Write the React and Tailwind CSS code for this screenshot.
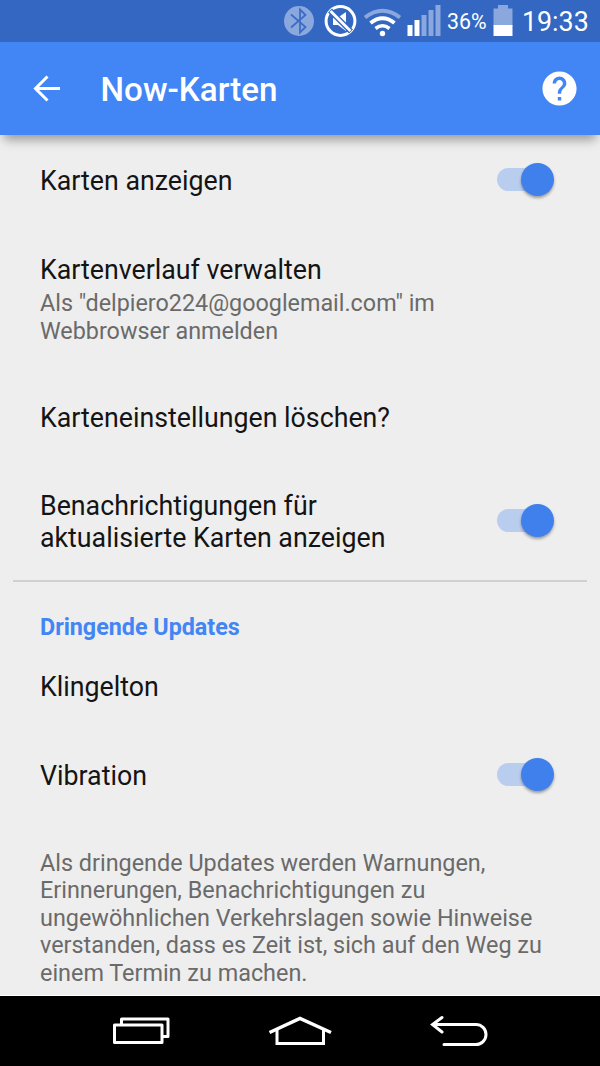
import { useState } from 'react';

function Toggle({ label, checked, onChange }) {
  return (
    <button
      role="switch"
      aria-label={label}
      aria-checked={checked}
      onClick={() => onChange(!checked)}
      className="flex w-[57px] h-[34px] -mt-[13px] -mb-[8px] items-center shrink-0"
    >
      <span className={checked ? 'w-10 h-[23px] rounded-full bg-[#b9ceef]' : 'w-10 h-[23px] rounded-full bg-[#b9b9b9]'} />
      <span
        className={
          checked
            ? 'size-[33px] -ml-4 rounded-full bg-[#4080ec] shadow-[0_2px_3px_rgba(0,0,0,0.35)]'
            : 'size-[33px] -ml-10 rounded-full bg-[#f1f1f1] shadow-[0_2px_3px_rgba(0,0,0,0.35)]'
        }
      />
    </button>
  );
}

// One preference row: title, optional summary, optional switch
function Row({ title, summary, children }) {
  return (
    <div className="flex items-center justify-between pl-10 pr-[46px] py-[28.7px]">
      <div>
        <div className="text-[26.75px] leading-[31.25px] text-[#141414] whitespace-pre-line">{title}</div>
        {summary && (
          <div className="mt-[4px] text-[23.33px] leading-[27.5px] text-[#6a6a6a] whitespace-pre-line">{summary}</div>
        )}
      </div>
      {children}
    </div>
  );
}

function StatusBar() {
  return (
    <div className="flex h-[42px] items-center justify-end bg-[#3367c1] pr-3 text-white">
      <svg width="158" height="42" viewBox="284 0 158 42" fill="none">
        {/* Bluetooth */}
        <circle cx="299" cy="21" r="15" fill="#8aa8de" />
        <path d="M291 14.5 L305.500 27 L300 32.500 V9.500 L305.500 15 L291 27.5" stroke="#3c6dc4" strokeWidth="1.800" />
        {/* Muted */}
        <circle cx="340.500" cy="21" r="14.4" stroke="#fff" strokeWidth="3" />
        <path d="M333 17.5 H338 L346 12 V31 L338 25 H333 Z" fill="#fff" />
        <path d="M330 10.500 L351 31.500" stroke="#3367c1" strokeWidth="5.500" />
        <path d="M330.500 11 L350.500 31" stroke="#fff" strokeWidth="2.800" />
        {/* Wifi */}
        <path d="M365 17.500 Q382.500 4 400 17.500" stroke="#8aa8de" strokeWidth="4" />
        <path d="M370.500 23 Q382.500 13.500 394.500 23" stroke="#fff" strokeWidth="3.800" />
        <path d="M375.500 28.500 Q382.500 23 389.500 28.500" stroke="#fff" strokeWidth="3.600" />
        <circle cx="382.500" cy="33.500" r="2.700" fill="#fff" />
        {/* Signal */}
        <path d="M407.500 25 h5 v11 h-5z M414.500 20 h5 v16 h-5z" fill="#fff" />
        <path d="M421.500 15 h5 v21 h-5z M428.500 10 h5 v26 h-5z M435.500 5 h5 v31 h-5z" fill="#8aa8de" />
      </svg>
      <span className="ml-[5px] mt-[2px] w-[41px] whitespace-nowrap text-[21.3px] leading-none">36%</span>
      <svg className="ml-[5px]" width="20" height="42" viewBox="0 0 20 42">
        <path d="M5 5 H15 V8.500 H19.500 V26 H0.500 V8.500 H5 Z" fill="#8aa8de" />
        <path d="M0.500 25 H19.500 V36 H0.500 Z" fill="#fff" />
      </svg>
      <span className="ml-[9px] mt-[3px] w-[66px] whitespace-nowrap text-[26.8px] leading-none">19:33</span>
    </div>
  );
}

function AppBar() {
  return (
    <header className="relative flex h-[93px] items-center bg-[#4285f4] pl-[33px] pr-[20px] text-white shadow-[0_9px_10px_-4px_rgba(0,0,0,0.35)]">
      <button aria-label="Zurück">
        <svg width="28" height="28" viewBox="0 0 28 28" fill="none" stroke="#fff" strokeWidth="3">
          <path d="M27 13.500 H3 M14.500 1.500 L2.500 13.500 L14.500 25.500" />
        </svg>
      </button>
      <h1 className="ml-[39.5px] mt-[2px] flex-1 text-[33.2px] font-medium leading-none">Now-Karten</h1>
      <button aria-label="Hilfe">
        <svg width="41" height="41" viewBox="0 0 24 24" fill="#fff">
          <path d="M12 2C6.480 2 2 6.480 2 12s4.480 10 10 10 10-4.480 10-10S17.520 2 12 2zm1 17h-2v-2h2v2zm2.070-7.750l-.9.920C13.450 12.900 13 13.500 13 15h-2v-.5c0-1.100.450-2.100 1.170-2.830l1.240-1.260c.370-.360.590-.860.590-1.410 0-1.100-.9-2-2-2s-2 .9-2 2H8c0-2.210 1.790-4 4-4s4 1.790 4 4c0 .880-.360 1.680-.930 2.250z" />
        </svg>
      </button>
    </header>
  );
}

function NavBar() {
  return (
    <nav className="flex h-[70px] items-center bg-black">
      <svg width="600" height="70" viewBox="0 996 600 70" fill="none" stroke="#fff" strokeWidth="3">
        <path d="M114.500 1025 H162 V1042.500 H114.500 Z M121.500 1025 V1019 H168 V1036.500 H162" strokeLinejoin="round" />
        <path d="M269.500 1032.500 L300 1018.500 L331 1032.500" strokeWidth="3.500" />
        <path d="M277 1030 V1043.500 H323.500 V1030" />
        <path d="M442 1017.500 L432.500 1024.500 L442 1032 M433 1024.500 H476 A10 10 0 0 1 476 1044.500 H444" strokeLinecap="round" />
      </svg>
    </nav>
  );
}

export default function App() {
  const [showCards, setShowCards] = useState(true);
  const [notify, setNotify] = useState(true);
  const [vibrate, setVibrate] = useState(true);

  return (
    <div className="flex flex-col w-[600px] h-[1066px] overflow-hidden bg-[#eeeeee] font-['Roboto',sans-serif]">
      <StatusBar />
      <AppBar />

      <main className="flex-1 min-h-0 overflow-hidden border-b border-white pt-[2.8px]">
        <Row title="Karten anzeigen">
          <Toggle label="Karten anzeigen" checked={showCards} onChange={setShowCards} />
        </Row>
        <Row
          title="Kartenverlauf verwalten"
          summary={'Als "delpiero224@googlemail.com" im\nWebbrowser anmelden'}
        />
        <Row title="Karteneinstellungen löschen?" />
        <Row title={'Benachrichtigungen für\naktualisierte Karten anzeigen'}>
          <Toggle label="Benachrichtigungen" checked={notify} onChange={setNotify} />
        </Row>

        <div className="mx-[13px] -mt-[3px] h-[2px] bg-[#d0d0d0]" />

        <h2 className="mt-8 mb-[2.6px] pl-10 text-[23.33px] font-bold leading-[27.5px] tracking-[-0.02px] text-[#4285f4]">
          Dringende Updates
        </h2>
        <Row title="Klingelton" />
        <Row title="Vibration">
          <Toggle label="Vibration" checked={vibrate} onChange={setVibrate} />
        </Row>
        <p className="mt-[28.8px] pl-10 text-[23.4px] leading-[27.5px] text-[#6a6a6a] whitespace-pre-line">
          {'Als dringende Updates werden Warnungen,\nErinnerungen, Benachrichtigungen zu\nungewöhnlichen Verkehrslagen sowie Hinweise\nverstanden, dass es Zeit ist, sich auf den Weg zu\neinem Termin zu machen.'}
        </p>
      </main>

      <NavBar />
    </div>
  );
}
